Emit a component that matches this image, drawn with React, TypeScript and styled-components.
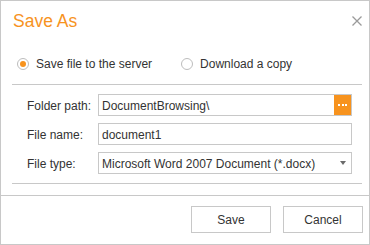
import React, { useState } from 'react'
import styled, { createGlobalStyle } from 'styled-components'

const GlobalStyle = createGlobalStyle`
  body {
    margin: 0;
    background: #fff;
    font-family: 'Liberation Sans', Arial, sans-serif;
  }
`

const orange = '#f7931e'
const line = '#c8c8c8'

const Dialog = styled.div`
  box-sizing: border-box;
  width: 370px;
  height: 245px;
  border: 1px solid ${line};
  background: #fff;
  display: flex;
  flex-direction: column;
  color: #333;
  font-size: 12px;
`

const Header = styled.div`
  display: flex;
  justify-content: space-between;
  align-items: flex-start;
  padding: 10px 7px 0 12px;
`

const Title = styled.h1`
  margin: 0;
  font-size: 17.5px;
  line-height: 20px;
  font-weight: normal;
  color: ${orange};
`

const CloseButton = styled.button`
  border: 0;
  background: none;
  padding: 0;
  margin: 5px 0 0 0;
  width: 10px;
  height: 10px;
  display: flex;
  cursor: pointer;
`

const Body = styled.div`
  padding: 0 7px 11px 11px;
`

const RadioGroup = styled.div`
  display: flex;
  align-items: center;
  height: 24px;
  margin-top: 21px;
  padding-left: 5px;
  gap: 29px;
`

const RadioItem = styled.label`
  display: flex;
  align-items: center;
  gap: 7px;
  cursor: pointer;
`

const RadioCircle = styled.span<{ $checked: boolean }>`
  box-sizing: border-box;
  width: 12px;
  height: 12px;
  border-radius: 50%;
  border: 1.5px solid #bdbdbd;
  display: flex;
  align-items: center;
  justify-content: center;
  &::after {
    content: '';
    width: 6px;
    height: 6px;
    border-radius: 50%;
    background: ${orange};
    display: ${({ $checked }) => ($checked ? 'block' : 'none')};
  }
`

const Separator = styled.div<{ $top?: number }>`
  height: 1px;
  background: ${line};
  margin-top: ${({ $top }) => $top || 0}px;
`

const Form = styled.div`
  display: grid;
  grid-template-columns: 71px 1fr;
  row-gap: 7px;
  align-items: center;
  padding: 9px 10px 9px 15px;
`

const Label = styled.span`
  padding-top: 2px;
`

const Field = styled.div`
  box-sizing: border-box;
  height: 22px;
  border: 1px solid ${line};
  display: flex;
  align-items: center;
`

const FieldText = styled.span`
  flex: 1;
  padding: 1px 0 0 3px;
  white-space: nowrap;
  overflow: hidden;
`

const BrowseButton = styled.button`
  width: 17px;
  height: 20px;
  border: 0;
  padding: 0;
  background: ${orange};
  display: flex;
  align-items: center;
  justify-content: center;
  gap: 1.5px;
  cursor: pointer;
`

const Dot = styled.span`
  width: 2px;
  height: 2px;
  background: #fff;
`

const Arrow = styled.span`
  width: 0;
  height: 0;
  margin-right: 5px;
  border-left: 3.5px solid transparent;
  border-right: 3.5px solid transparent;
  border-top: 4px solid #6b6b6b;
`

const Footer = styled.div`
  flex: 1;
  border-top: 1px solid ${line};
  display: flex;
  justify-content: flex-end;
  align-items: flex-start;
  gap: 12px;
  padding: 10px 6px 0 0;
`

const Button = styled.button`
  box-sizing: border-box;
  width: 80px;
  height: 27px;
  border: 1px solid ${line};
  background: #fff;
  color: #333;
  font-family: inherit;
  font-size: 12px;
  cursor: pointer;
`

export default function App() {
  const [target, setTarget] = useState('server')
  return (
    <>
      <GlobalStyle />
      <Dialog>
        <Header>
          <Title>Save As</Title>
          <CloseButton aria-label="Close">
            <svg width="10" height="10" viewBox="0 0 10 10">
              <path d="M0.5 0.5 L9.5 9.5 M9.5 0.5 L0.5 9.5" stroke="#9a9a9a" strokeWidth="1.3" />
            </svg>
          </CloseButton>
        </Header>
        <Body>
          <RadioGroup>
            <RadioItem onClick={() => setTarget('server')}>
              <RadioCircle $checked={target === 'server'} />
              Save file to the server
            </RadioItem>
            <RadioItem onClick={() => setTarget('download')}>
              <RadioCircle $checked={target === 'download'} />
              Download a copy
            </RadioItem>
          </RadioGroup>
          <Separator $top={8} />
          <Form>
            <Label>Folder path:</Label>
            <Field>
              <FieldText>DocumentBrowsing\</FieldText>
              <BrowseButton aria-label="Browse">
                <Dot />
                <Dot />
                <Dot />
              </BrowseButton>
            </Field>
            <Label>File name:</Label>
            <Field>
              <FieldText>document1</FieldText>
            </Field>
            <Label>File type:</Label>
            <Field>
              <FieldText>Microsoft Word 2007 Document (*.docx)</FieldText>
              <Arrow />
            </Field>
          </Form>
          <Separator />
        </Body>
        <Footer>
          <Button>Save</Button>
          <Button>Cancel</Button>
        </Footer>
      </Dialog>
    </>
  )
}
